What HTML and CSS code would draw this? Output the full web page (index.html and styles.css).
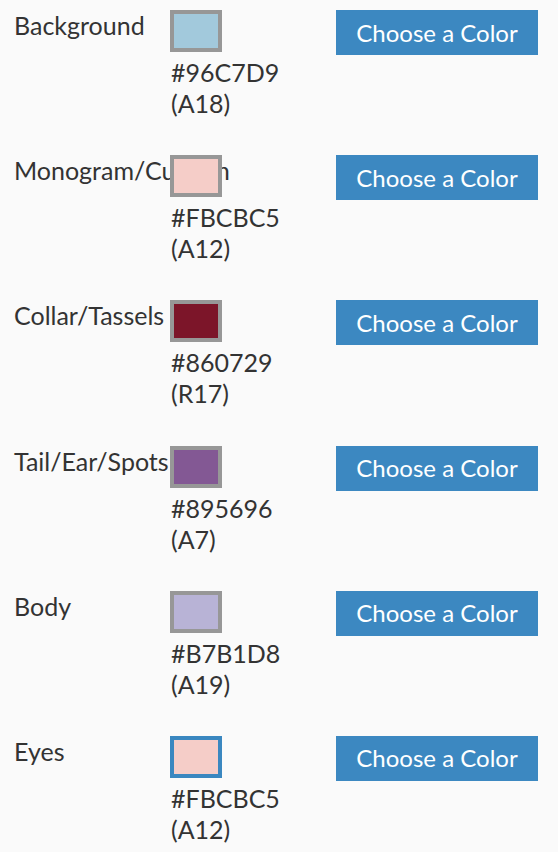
FILE: index.html
```html
<!DOCTYPE html>
<html>
<head>
<meta charset="utf-8">
<link rel="stylesheet" href="styles.css">
</head>
<body>
<div class="list">
  <div class="row">
    <div class="label">Background</div>
    <div class="swatch-col">
      <span class="swatch" style="background:#a2c9dc"></span>
      <div class="code">#96C7D9<br>(A18)</div>
    </div>
    <div class="btn-col"><button class="btn">Choose a Color</button></div>
  </div>
  <div class="row">
    <div class="label">Monogram/Custom</div>
    <div class="swatch-col">
      <span class="swatch" style="background:#f5cdc8"></span>
      <div class="code">#FBCBC5<br>(A12)</div>
    </div>
    <div class="btn-col"><button class="btn">Choose a Color</button></div>
  </div>
  <div class="row">
    <div class="label">Collar/Tassels</div>
    <div class="swatch-col">
      <span class="swatch" style="background:#7c1529"></span>
      <div class="code">#860729<br>(R17)</div>
    </div>
    <div class="btn-col"><button class="btn">Choose a Color</button></div>
  </div>
  <div class="row">
    <div class="label">Tail/Ear/Spots</div>
    <div class="swatch-col">
      <span class="swatch" style="background:#835894"></span>
      <div class="code">#895696<br>(A7)</div>
    </div>
    <div class="btn-col"><button class="btn">Choose a Color</button></div>
  </div>
  <div class="row">
    <div class="label">Body</div>
    <div class="swatch-col">
      <span class="swatch" style="background:#b8b3d6"></span>
      <div class="code">#B7B1D8<br>(A19)</div>
    </div>
    <div class="btn-col"><button class="btn">Choose a Color</button></div>
  </div>
  <div class="row">
    <div class="label">Eyes</div>
    <div class="swatch-col">
      <span class="swatch active" style="background:#f5cdc8"></span>
      <div class="code">#FBCBC5<br>(A12)</div>
    </div>
    <div class="btn-col"><button class="btn">Choose a Color</button></div>
  </div>
</div>
</body>
</html>
```
FILE: styles.css
```css
html, body {
  margin: 0;
  padding: 0;
  background: #fafafa;
}
body {
  font-family: Lato, "Open Sans", sans-serif;
  color: #333333;
}
.list {
  padding: 10px 20px 0 14px;
  display: flex;
  flex-direction: column;
}
.row {
  display: grid;
  grid-template-columns: 156px 166px 202px;
  height: 145.2px;
  align-items: start;
}
.label {
  font-size: 25px;
  line-height: 31px;
  white-space: nowrap;
  overflow: visible;
  position: relative;
  z-index: 0;
}
.swatch-col {
  position: relative;
  z-index: 1;
  display: flex;
  flex-direction: column;
  align-items: flex-start;
}
.swatch {
  display: block;
  width: 44px;
  height: 34px;
  border: 4px solid #979797;
}
.swatch.active {
  border-color: #3a87c0;
}
.code {
  font-size: 25px;
  line-height: 31px;
  margin-top: 5px;
  margin-left: 1px;
}
.btn {
  box-sizing: border-box;
  width: 202px;
  height: 45px;
  border: none;
  background: #3c88c1;
  color: #ffffff;
  font-family: Lato, sans-serif;
  font-size: 24px;
  line-height: 30px;
  padding: 0;
  cursor: pointer;
}
```
